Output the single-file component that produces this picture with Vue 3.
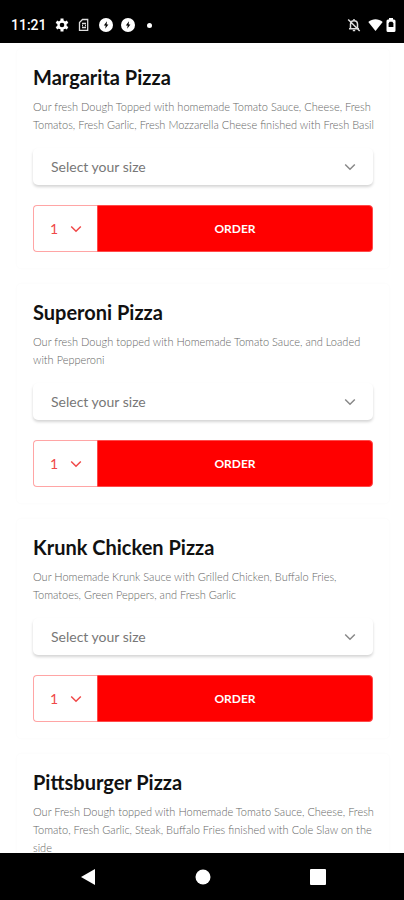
<script setup>
import { reactive } from 'vue'

const pizzas = reactive([
  {
    name: 'Margarita Pizza',
    lines: [
      'Our fresh Dough Topped with homemade Tomato Sauce, Cheese, Fresh',
      'Tomatos, Fresh Garlic, Fresh Mozzarella Cheese finished with Fresh Basil',
    ],
    size: '',
    quantity: 1,
  },
  {
    name: 'Superoni Pizza',
    lines: [
      'Our fresh Dough topped with Homemade Tomato Sauce, and Loaded',
      'with Pepperoni',
    ],
    size: '',
    quantity: 1,
  },
  {
    name: 'Krunk Chicken Pizza',
    lines: [
      'Our Homemade Krunk Sauce with Grilled Chicken, Buffalo Fries,',
      'Tomatoes, Green Peppers, and Fresh Garlic',
    ],
    size: '',
    quantity: 1,
  },
  {
    name: 'Pittsburger Pizza',
    lines: [
      'Our Fresh Dough topped with Homemade Tomato Sauce, Cheese, Fresh',
      'Tomato, Fresh Garlic, Steak, Buffalo Fries finished with Cole Slaw on the',
      'side',
    ],
    size: '',
    quantity: 1,
  },
])
</script>

<template>
  <div class="screen">
    <header class="status">
      <span class="time">11:21</span>
      <div class="left-icons">
        <svg width="14" height="14" viewBox="0 0 14 14">
          <g stroke="#fff" stroke-width="3">
            <path d="M7 .5v13M1.400 3.750l11.200 6.500M1.400 10.250l11.200-6.500" />
          </g>
          <circle cx="7" cy="7" r="4.700" fill="#fff" />
          <circle cx="7" cy="7" r="2.300" fill="#000" />
        </svg>
        <svg width="14" height="14" viewBox="-1 0 14 14" fill="none" stroke="#ddd" stroke-width="1.300">
          <path d="M4.500 1.500h5.200v10.800H1.500V4.500z" />
          <path d="M4 5.500h4M4 9.500h4M4 7.500h1M7 7.500h1" />
        </svg>
        <svg width="14" height="14" viewBox="0 0 14 14">
          <circle cx="7" cy="7" r="7" fill="#fff" />
          <path d="M8 3.200 4.800 7.500h1.900L6.200 10.800l3.200-4.400H7.600z" fill="#000" />
        </svg>
        <svg width="14" height="14" viewBox="0 0 14 14">
          <circle cx="7" cy="7" r="7" fill="#fff" />
          <path d="M8 3.200 4.800 7.500h1.900L6.200 10.800l3.200-4.400H7.600z" fill="#000" />
        </svg>
        <svg class="dot" width="5" height="5" viewBox="0 0 5 5">
          <circle cx="2.500" cy="2.500" r="2.500" fill="#fff" />
        </svg>
      </div>
      <div class="right-icons">
        <svg width="14" height="14" viewBox="0 0 14 14" fill="none" stroke="#ddd" stroke-width="1.500">
          <path d="M3.500 10.500V6.200C3.500 4 5 2.700 7 2.700s3.500 1.300 3.500 3.500v4.300M2 10.700h10M7 1v1.700M1.200 1.500l11.500 11.500" />
          <path d="M5.800 12.500h2.400" />
        </svg>
        <div class="signal">
          <svg width="15" height="12" viewBox="0 0 15 12" fill="#fff">
            <path d="M.3 3C4.500-.7 10.500-.7 14.700 3L7.500 12z" />
          </svg>
          <svg width="10" height="14" viewBox="0 0 10 14">
            <path d="M3 0h4v1.500h1a1.500 1.500 0 0 1 1.500 1.500v9.500A1.500 1.500 0 0 1 8 14H2a1.500 1.500 0 0 1-1.500-1.500V3A1.500 1.500 0 0 1 2 1.500h1z" fill="#fff" />
            <path d="M3.600 3.800h2.800l1 1.700V9H2.600V5.500z" fill="#000" />
          </svg>
        </div>
      </div>
    </header>

    <main class="menu">
      <article v-for="pizza in pizzas" :key="pizza.name" class="card">
        <h2 class="name">{{ pizza.name }}</h2>
        <p class="description">
          <span v-for="line in pizza.lines" :key="line" class="line">{{ line }}</span>
        </p>
        <div class="size">
          <select v-model="pizza.size" class="size-select" :aria-label="`${pizza.name} size`">
            <option value="">Select your size</option>
          </select>
          <svg class="chevron" width="12" height="8" viewBox="0 0 12 8">
            <path d="M1.200 1.500 6 6.200l4.800-4.700" />
          </svg>
        </div>
        <div class="actions">
          <div class="quantity">
            <select v-model="pizza.quantity" class="quantity-select" :aria-label="`${pizza.name} quantity`">
              <option :value="1">1</option>
            </select>
            <svg class="chevron" width="12" height="8" viewBox="0 0 12 8">
              <path d="M1.200 1.500 6 6.200l4.800-4.700" />
            </svg>
          </div>
          <button type="button" class="order">ORDER</button>
        </div>
      </article>
    </main>

    <nav class="system-nav">
      <button type="button" aria-label="Back">
        <svg width="16" height="18" viewBox="0 0 16 18"><path d="M15 1v16L1 9z" /></svg>
      </button>
      <button type="button" aria-label="Home">
        <svg width="16" height="16" viewBox="0 0 16 16"><circle cx="8" cy="8" r="7.500" /></svg>
      </button>
      <button type="button" aria-label="Recents">
        <svg width="16" height="16" viewBox="0 0 16 16"><rect width="16" height="16" rx="1" /></svg>
      </button>
    </nav>
  </div>
</template>

<style>
body {
  background: #fff;
}
</style>

<style scoped>
.screen {
  display: flex;
  flex-direction: column;
  height: 100vh;
  overflow: hidden;
  font-family: Lato, "Liberation Sans", sans-serif;
}

.screen * {
  box-sizing: border-box;
}

svg {
  display: block;
  flex: none;
}

.status {
  display: flex;
  align-items: center;
  flex: none;
  height: 43px;
  padding: 7px 8px 0 11px;
  background: #000;
  color: #fff;
}

.time {
  width: 44px;
  font: 500 14px/18px Roboto, sans-serif;
}

.left-icons {
  display: flex;
  align-items: center;
  gap: 8px;
}

.dot {
  margin-left: 4px;
}

.right-icons {
  display: flex;
  align-items: center;
  gap: 7px;
  margin-left: auto;
}

.signal {
  display: flex;
  align-items: center;
  gap: 3px;
}

.menu {
  display: flex;
  flex: 1;
  flex-direction: column;
  gap: 16px;
  min-height: 0;
  padding: 6px 15px 0 17px;
  overflow-y: auto;
  scrollbar-width: none;
}

.card {
  flex: none;
  padding: 16px;
  border-radius: 4px;
  box-shadow: 0 0 3px rgba(0, 0, 0, 0.03);
}

.name {
  margin: 0;
  color: #111;
  font-size: 20px;
  font-weight: 700;
  line-height: 24px;
}

.description {
  margin: 9px 0 14px;
  color: #666;
  font-size: 11px;
  font-weight: 300;
  line-height: 18px;
}

.line {
  display: block;
  white-space: nowrap;
}

.size,
.quantity {
  display: grid;
  align-items: center;
}

.size > *,
.quantity > * {
  grid-area: 1 / 1;
}

.size {
  height: 37px;
}

select {
  width: 100%;
  height: 100%;
  margin: 0;
  border: 0;
  background: transparent;
  appearance: none;
  font-family: inherit;
  font-size: 14px;
}

.size-select {
  padding: 0 36px 0 18px;
  border-radius: 5px;
  box-shadow: 0 2px 3px rgba(0, 0, 0, 0.17);
  color: #777;
}

.chevron {
  justify-self: end;
  margin-right: 17px;
  fill: none;
  stroke: #888;
  stroke-width: 1.5;
  pointer-events: none;
}

.actions {
  display: flex;
  height: 47px;
  margin-top: 20px;
}

.quantity {
  width: 64px;
  flex: none;
  border: 1px solid #ffa5a5;
  border-right: 0;
  border-radius: 4px 0 0 4px;
}

.quantity-select {
  padding: 0 30px 0 16px;
  color: #f04848;
}

.quantity .chevron {
  margin-right: 15px;
  stroke: #f04848;
}

.order {
  flex: 1;
  padding: 0;
  border: 1px solid #ff4a4a;
  border-radius: 0 4px 4px 0;
  background: #f00;
  color: #fff;
  font-family: inherit;
  font-size: 12px;
  font-weight: 700;
}

.system-nav {
  display: flex;
  align-items: center;
  justify-content: center;
  flex: none;
  height: 47px;
  padding-left: 1px;
  background: #000;
}

.system-nav button {
  display: flex;
  justify-content: center;
  width: 115px;
  padding: 0;
  border: 0;
  background: none;
  fill: #fff;
}
</style>
